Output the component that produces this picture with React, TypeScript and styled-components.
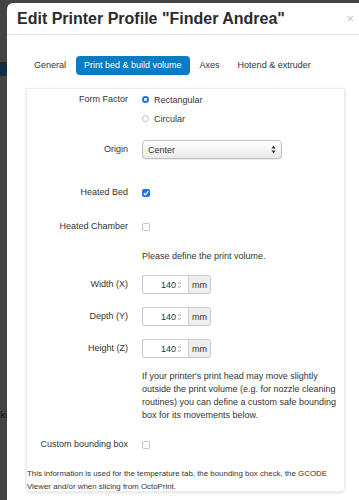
import styled, { createGlobalStyle } from 'styled-components';

const GlobalStyle = createGlobalStyle`
  html, body {
    margin: 0;
    padding: 0;
    background: #444;
  }
  body {
    font-family: "Liberation Sans", Arial, sans-serif;
    color: #333;
  }
`;

const App = () => {
  return (
    <>
      <GlobalStyle />
      <Screen>
        <Gutter>
          <GutterBand />
          <GutterText>xki</GutterText>
        </Gutter>
        <Modal>
          <Header>
            <Title>Edit Printer Profile "Finder Andrea"</Title>
            <Close>×</Close>
          </Header>
          <Body>
            <Tabs>
              <Tab>General</Tab>
              <Tab $active>Print bed &amp; build volume</Tab>
              <Tab>Axes</Tab>
              <Tab>Hotend &amp; extruder</Tab>
            </Tabs>
            <Panel>
              <FormRow $gap={1}>
                <Label>Form Factor</Label>
                <Controls>
                  <OptionLine>
                    <Radio $checked />
                    Rectangular
                  </OptionLine>
                  <OptionLine>
                    <Radio />
                    Circular
                  </OptionLine>
                </Controls>
              </FormRow>

              <FormRow $gap={12}>
                <Label>Origin</Label>
                <Controls>
                  <Select>
                    Center
                    <SelectArrows viewBox="0 0 5 9" width="5" height="9">
                      <path d="M2.5 0.5 L4.5 3.5 L0.5 3.5 Z" fill="#333" />
                      <path d="M2.5 8.5 L4.5 5.5 L0.5 5.5 Z" fill="#333" />
                    </SelectArrows>
                  </Select>
                </Controls>
              </FormRow>

              <FormRow $gap={24}>
                <Label>Heated Bed</Label>
                <Controls>
                  <OptionLine>
                    <CheckBox $checked>
                      <svg viewBox="0 0 8 8" width="8" height="8">
                        <path d="M1.8 4.2 L3.4 5.8 L6.3 2.2" stroke="#fff" strokeWidth="1.3" fill="none" />
                      </svg>
                    </CheckBox>
                  </OptionLine>
                </Controls>
              </FormRow>

              <FormRow $gap={15}>
                <Label>Heated Chamber</Label>
                <Controls>
                  <OptionLine>
                    <CheckBox />
                  </OptionLine>
                </Controls>
              </FormRow>

              <FormRow $gap={10}>
                <span />
                <Controls>
                  <OptionLine>Please define the print volume.</OptionLine>
                </Controls>
              </FormRow>

              {['Width (X)', 'Depth (Y)', 'Height (Z)'].map((label, i) => (
                <FormRow key={label} $gap={i === 0 ? 10 : 13}>
                  <Label>{label}</Label>
                  <Controls>
                    <InputGroup>
                      <NumberInput>
                        140
                        <Spinner viewBox="0 0 5 8" width="5" height="8">
                          <path d="M1 3 L2.5 1.2 L4 3" stroke="#999" strokeWidth="0.8" fill="none" />
                          <path d="M1 5 L2.5 6.8 L4 5" stroke="#999" strokeWidth="0.8" fill="none" />
                        </Spinner>
                      </NumberInput>
                      <Addon>mm</Addon>
                    </InputGroup>
                  </Controls>
                </FormRow>
              ))}

              <FormRow $gap={12}>
                <span />
                <Help>
                  If your printer's print head may move slightly outside the print volume
                  (e.g. for nozzle cleaning routines) you can define a custom safe bounding
                  box for its movements below.
                </Help>
              </FormRow>

              <FormRow $gap={13}>
                <Label>Custom bounding box</Label>
                <Controls>
                  <OptionLine>
                    <CheckBox />
                  </OptionLine>
                </Controls>
              </FormRow>

              <Footnote>
                This information is used for the temperature tab, the bounding box check, the GCODE
                Viewer and/or when slicing from OctoPrint.
              </Footnote>
            </Panel>
          </Body>
        </Modal>
      </Screen>
    </>
  );
};

export default App;

const Screen = styled.div`
  display: flex;
  height: 500px;
  overflow: hidden;
  background: #444;
`;

const Gutter = styled.div`
  width: 7px;
  flex: none;
  display: flex;
  flex-direction: column;
  padding-top: 62px;
  overflow: hidden;
`;

const GutterBand = styled.div`
  height: 14px;
  background: #10304a;
`;

const GutterText = styled.div`
  margin-top: 334px;
  display: flex;
  justify-content: flex-end;
  font-size: 9px;
  color: #111;
  white-space: nowrap;
`;

const Modal = styled.div`
  flex: 1;
  margin-top: 3px;
  background: #fff;
  border-top-left-radius: 6px;
  overflow: hidden;
`;

const Header = styled.div`
  height: 31px;
  border-bottom: 1px solid #e8e8e8;
  display: flex;
  align-items: center;
  justify-content: space-between;
  padding: 0 5px 0 10px;
`;

const Title = styled.h3`
  margin: 0;
  font-size: 16px;
  font-weight: bold;
  color: #2b2b2b;
  white-space: nowrap;
`;

const Close = styled.span`
  font-size: 13px;
  color: #c4c4c4;
  line-height: 1;
`;

const Body = styled.div`
  padding: 21px 5px 0 19px;
`;

const Tabs = styled.div`
  display: flex;
  gap: 2px;
`;

const Tab = styled.div<{ $active?: boolean }>`
  height: 19px;
  line-height: 19px;
  padding: 0 8px;
  font-size: 9px;
  border-radius: 4px;
  white-space: nowrap;
  color: ${p => (p.$active ? '#fff' : '#333')};
  background: ${p => (p.$active ? '#0a7dc2' : 'transparent')};
`;

const Panel = styled.div`
  margin-top: 13px;
  width: 319px;
  height: 404px;
  box-sizing: border-box;
  border: 1px solid #ececec;
  border-radius: 0 0 5px 5px;
  box-shadow: 0 1px 3px rgba(0, 0, 0, 0.12);
`;

const FormRow = styled.div<{ $gap: number }>`
  display: grid;
  grid-template-columns: 101px 1fr;
  column-gap: 14px;
  margin-top: ${p => p.$gap}px;
`;

const Label = styled.div`
  text-align: right;
  font-size: 9px;
  line-height: 19px;
  color: #333;
  white-space: nowrap;
`;

const Controls = styled.div`
  display: flex;
  flex-direction: column;
`;

const OptionLine = styled.div`
  display: flex;
  align-items: center;
  gap: 5px;
  height: 19px;
  font-size: 9px;
  color: #333;
`;

const Radio = styled.span<{ $checked?: boolean }>`
  width: 7px;
  height: 7px;
  box-sizing: border-box;
  border-radius: 50%;
  margin-left: 0;
  ${p =>
    p.$checked
      ? `background: radial-gradient(circle, #fff 0 1.3px, #1a73e8 1.6px);`
      : `background: #fff; border: 1px solid #bdbdbd;`}
`;

const CheckBox = styled.span<{ $checked?: boolean }>`
  display: flex;
  width: 8px;
  height: 8px;
  box-sizing: border-box;
  border-radius: 2px;
  ${p =>
    p.$checked
      ? `background: #1a73e8;`
      : `background: #fff; border: 1px solid #c4c4c4;`}
`;

const Select = styled.div`
  width: 140px;
  height: 19px;
  box-sizing: border-box;
  display: flex;
  align-items: center;
  justify-content: space-between;
  padding: 0 5px 0 5px;
  font-size: 9px;
  color: #333;
  border: 1px solid #bfbfbf;
  border-radius: 4px;
  background: linear-gradient(#ffffff, #e9e9e9);
  box-shadow: 0 1px 1px rgba(0, 0, 0, 0.08);
`;

const SelectArrows = styled.svg`
  display: block;
`;

const InputGroup = styled.div`
  display: flex;
  height: 19px;
  width: 69px;
`;

const NumberInput = styled.div`
  width: 46px;
  box-sizing: border-box;
  display: flex;
  align-items: center;
  justify-content: flex-end;
  gap: 1px;
  padding-right: 6px;
  font-size: 9px;
  color: #333;
  border: 1px solid #c9c9c9;
  border-right: none;
  border-radius: 3px 0 0 3px;
  background: #fff;
`;

const Spinner = styled.svg`
  display: block;
`;

const Addon = styled.div`
  width: 23px;
  box-sizing: border-box;
  display: flex;
  align-items: center;
  justify-content: center;
  font-size: 9px;
  color: #333;
  background: #eee;
  border: 1px solid #c9c9c9;
  border-radius: 0 3px 3px 0;
`;

const Help = styled.p`
  margin: 0;
  width: 200px;
  font-size: 9px;
  line-height: 13px;
  color: #333;
`;

const Footnote = styled.p`
  margin: 13px 0 0 0;
  font-size: 7.9px;
  line-height: 13px;
  color: #333;
`;
